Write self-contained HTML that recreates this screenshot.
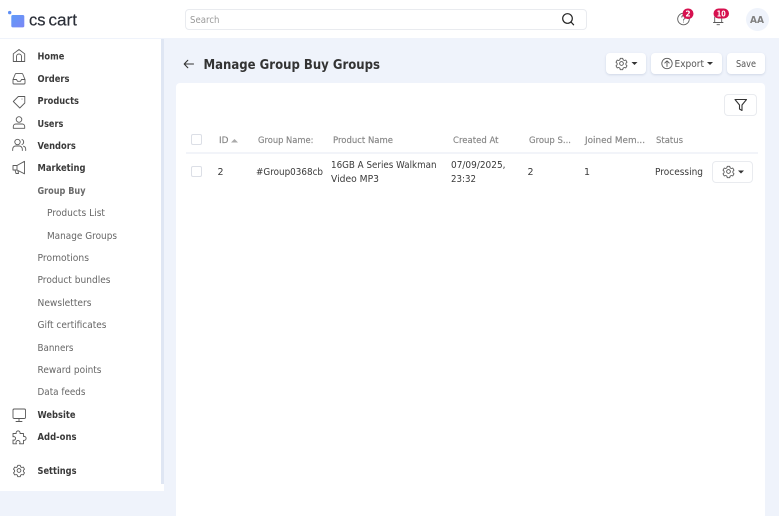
<!DOCTYPE html>
<html lang="en">
<head>
<meta charset="utf-8">
<title>Manage Group Buy Groups</title>
<style>
html,body{margin:0;padding:0;width:779px;height:516px;overflow:hidden;background:#eff3fb;}
.b{position:absolute;box-sizing:border-box;}
svg{position:absolute;left:0;top:0;}
text{font-family:"DejaVu Sans","Liberation Sans",sans-serif;}
.logo{font-family:"Liberation Sans",sans-serif;font-size:17px;fill:#2b2f38;stroke:#2b2f38;stroke-width:.2px;}
.m{font-size:9.500px;font-weight:700;fill:#3a3a3a;}
.s{font-size:9.500px;fill:#666;}
.sb{font-size:9.500px;font-weight:700;fill:#6a6a6a;}
.h{font-size:8.800px;font-weight:400;fill:#858585;stroke:#858585;stroke-width:.15px;}
.c{font-size:9.500px;fill:#3a3a3a;}
.i{fill:none;stroke:#5a5a5a;stroke-width:.9;stroke-linecap:round;stroke-linejoin:round;}
.btn{background:#fff;border-radius:4px;box-shadow:0 1px 2px rgba(120,135,170,.25);}
</style>
</head>
<body>
<div class="b" style="left:0;top:0;width:779px;height:38px;background:#fff;"></div>
<div class="b" style="left:0;top:39px;width:161px;height:452px;background:#fff;"></div>
<div class="b" style="left:161px;top:39px;width:3px;height:445px;background:#dfe6f3;"></div>
<div class="b" style="left:161px;top:484px;width:3px;height:7px;background:#fff;"></div>
<div class="b" style="left:176px;top:83px;width:589px;height:433px;background:#fff;border-radius:4px 4px 0 0;"></div>
<div class="b" style="left:185px;top:9px;width:402px;height:21px;background:#fff;border:1px solid #e9ebef;border-radius:4px;"></div>
<div class="b btn" style="left:606px;top:53px;width:40px;height:21px;"></div>
<div class="b btn" style="left:651px;top:53px;width:71px;height:21px;"></div>
<div class="b btn" style="left:727px;top:53px;width:38px;height:21px;"></div>
<div class="b" style="left:724px;top:94px;width:33px;height:22px;border:1px solid #e9ebef;border-radius:4px;background:#fff;"></div>
<div class="b" style="left:186px;top:152px;width:572px;height:2px;background:#f2f4f9;"></div>
<div class="b" style="left:191px;top:134px;width:11px;height:11px;border:1px solid #dcdfe6;border-radius:2px;background:#fff;"></div>
<div class="b" style="left:191px;top:166px;width:11px;height:11px;border:1px solid #dcdfe6;border-radius:2px;background:#fff;"></div>
<div class="b" style="left:712px;top:161px;width:41px;height:22px;border:1px solid #e9ebef;border-radius:4px;background:#fff;"></div>
<div class="b" style="left:745.500px;top:7.500px;width:23px;height:23px;border-radius:50%;background:#eff3fb;"></div>

<svg width="779" height="516" viewBox="0 0 779 516" xmlns="http://www.w3.org/2000/svg">
<defs>
<linearGradient id="lg" x1="0" y1="0" x2="1" y2="1"><stop offset="0" stop-color="#5f9bf8"/><stop offset="1" stop-color="#7c86f5"/></linearGradient>
<g id="gear" class="i">
<circle cx="0" cy="0" r="1.900"/>
<path d="M-1.200-5.200h2.400l.4 1.500 1.200.7 1.500-.4 1.200 2.100-1.100 1.100v1.400l1.100 1.100-1.200 2.100-1.500-.4-1.200.7-.4 1.500h-2.400l-.4-1.500-1.200-.7-1.500.4-1.200-2.100 1.100-1.100v-1.400l-1.100-1.100 1.200-2.100 1.500.4 1.200-.7z"/>
</g>
</defs>

<!-- logo -->
<circle cx="9.700" cy="12.600" r="1.700" fill="#5f8ff5"/>
<rect x="11.300" y="15" width="13" height="12.400" rx="1.500" fill="url(#lg)"/>
<text class="logo" x="29" y="25.300" textLength="16.500" lengthAdjust="spacingAndGlyphs">cs</text>
<text class="logo" x="48.500" y="25.300" textLength="28.500" lengthAdjust="spacingAndGlyphs">cart</text>

<!-- search -->
<text x="190" y="22.800" font-size="9.500" fill="#9a9a9a" textLength="29.500" lengthAdjust="spacingAndGlyphs">Search</text>
<circle cx="567.500" cy="18.500" r="4.800" fill="none" stroke="#222" stroke-width="1.200"/>
<path d="M571 22l2.600 2.800" stroke="#222" stroke-width="1.200" fill="none" stroke-linecap="round"/>

<!-- header icons -->
<circle cx="683.500" cy="19" r="5.800" class="i"/>
<path d="M681.800 17.200a1.800 1.800 0 1 1 2.600 1.700c-.6.3-.9.7-.9 1.300M683.500 22v.1" class="i"/>
<rect x="682.500" y="8.500" width="11" height="10.500" rx="5.200" fill="#d6114f"/>
<text x="688" y="16.600" font-size="7.500" font-weight="700" fill="#fff" text-anchor="middle">2</text>
<path d="M713.500 22.500h9.500M714.700 22v-4.500a3.500 3.500 0 0 1 7 0V22M717 24.700h2.500" class="i"/>
<rect x="713.500" y="8.500" width="15.500" height="10" rx="5" fill="#d6114f"/>
<text x="721.200" y="16.400" font-size="7.500" font-weight="700" fill="#fff" text-anchor="middle" textLength="9" lengthAdjust="spacingAndGlyphs">10</text>
<text x="757" y="22.800" font-size="9.500" font-weight="700" fill="#808080" text-anchor="middle" textLength="14" lengthAdjust="spacingAndGlyphs">AA</text>

<!-- sidebar icons -->
<path d="M13.300 61.500v-7.700l5.700-4.300 5.700 4.300v7.700zM16.500 61.500v-5a2.500 2.500 0 0 1 5 0v5" class="i"/>
<path d="M13 79.500l2.300-5.500a1 1 0 0 1 .9-.6h5.600a1 1 0 0 1 .9.600l2.300 5.500v3.500a1 1 0 0 1-1 1h-10a1 1 0 0 1-1-1zH16.500l1 1.800h3l1-1.800H25" class="i"/>
<path d="M13.300 101.500l5-5h6.500v6.500l-5 5zM22 99v.1" class="i"/>
<circle cx="19" cy="119.500" r="2.800" class="i"/>
<path d="M13.300 128.300v-1.800a2.500 2.500 0 0 1 2.500-2.500h6.400a2.500 2.500 0 0 1 2.500 2.500v1.800z" class="i"/>
<circle cx="17.500" cy="142" r="2.700" class="i"/>
<path d="M12.700 150.500v-1.500a3 3 0 0 1 3-3h3.600a3 3 0 0 1 3 3v1.500M22 139.500a2.700 2.700 0 0 1 0 5M23.500 146.200a3 3 0 0 1 2.200 2.800v1.500" class="i"/>
<path d="M13 165.500v4.500h4l7.500 3.800v-12.500l-7.500 4.200zM17 165.500v4.500M15 170l1 3.500h2.500L18 171" class="i"/>
<rect x="13" y="409" width="12.500" height="9.500" rx="1.200" class="i"/>
<path d="M19 418.500v2.500M16 421.500h6" class="i"/>
<path d="M13 433.500h3.200a2 2 0 1 1 3.800 0h3.500v3a2 2 0 1 1 0 3.800v3.500h-4a2 2 0 1 0-3 0h-3.500v-3.800a1.800 1.800 0 1 0 0-3.200z" class="i"/>
<use href="#gear" x="19" y="470.500"/>

<!-- sidebar labels -->
<text class="m" x="37.500" y="59.500" textLength="26.800" lengthAdjust="spacingAndGlyphs">Home</text>
<text class="m" x="37.500" y="82" textLength="32" lengthAdjust="spacingAndGlyphs">Orders</text>
<text class="m" x="37.500" y="104" textLength="41.500" lengthAdjust="spacingAndGlyphs">Products</text>
<text class="m" x="37.500" y="127" textLength="25.800" lengthAdjust="spacingAndGlyphs">Users</text>
<text class="m" x="37.500" y="149" textLength="38.300" lengthAdjust="spacingAndGlyphs">Vendors</text>
<text class="m" x="37.500" y="171" textLength="48" lengthAdjust="spacingAndGlyphs">Marketing</text>
<text class="sb" x="37.500" y="194" textLength="48" lengthAdjust="spacingAndGlyphs">Group Buy</text>
<text class="s" x="47" y="216" textLength="58" lengthAdjust="spacingAndGlyphs">Products List</text>
<text class="s" x="47" y="239" textLength="70" lengthAdjust="spacingAndGlyphs">Manage Groups</text>
<text class="s" x="37.500" y="261" textLength="51.500" lengthAdjust="spacingAndGlyphs">Promotions</text>
<text class="s" x="37.500" y="283" textLength="73" lengthAdjust="spacingAndGlyphs">Product bundles</text>
<text class="s" x="37.500" y="306" textLength="54" lengthAdjust="spacingAndGlyphs">Newsletters</text>
<text class="s" x="37.500" y="328" textLength="69" lengthAdjust="spacingAndGlyphs">Gift certificates</text>
<text class="s" x="37.500" y="351" textLength="36" lengthAdjust="spacingAndGlyphs">Banners</text>
<text class="s" x="37.500" y="373" textLength="64" lengthAdjust="spacingAndGlyphs">Reward points</text>
<text class="s" x="37.500" y="395" textLength="48" lengthAdjust="spacingAndGlyphs">Data feeds</text>
<text class="m" x="37.500" y="418" textLength="38" lengthAdjust="spacingAndGlyphs">Website</text>
<text class="m" x="37.500" y="440" textLength="39" lengthAdjust="spacingAndGlyphs">Add-ons</text>
<text class="m" x="37.500" y="474" textLength="39" lengthAdjust="spacingAndGlyphs">Settings</text>

<!-- title -->
<path d="M193.500 64h-9M187.800 60.300L184.200 64l3.600 3.700" fill="none" stroke="#333" stroke-width="1.100" stroke-linecap="round" stroke-linejoin="round"/>
<text x="203.500" y="68.800" font-size="13" font-weight="700" fill="#333" textLength="176.500" lengthAdjust="spacingAndGlyphs">Manage Group Buy Groups</text>

<!-- toolbar -->
<use href="#gear" x="621.500" y="63.500"/>
<path d="M631.500 62h6l-3 3z" fill="#333"/>
<circle cx="667" cy="63.500" r="5.200" class="i"/>
<path d="M667 66.500v-5.500M664.800 63l2.200-2.200 2.200 2.200" class="i"/>
<text x="674.500" y="67" font-size="9.500" fill="#555" textLength="29.500" lengthAdjust="spacingAndGlyphs">Export</text>
<path d="M707 62h6l-3 3z" fill="#333"/>
<text x="736" y="67" font-size="9.500" fill="#555" textLength="20" lengthAdjust="spacingAndGlyphs">Save</text>
<path d="M735 99.500h11.500l-4.500 5.500v5.500l-2.500-1.500v-4z" fill="none" stroke="#333" stroke-width="1.100" stroke-linejoin="round"/>

<!-- table head -->
<text class="h" x="219" y="143.200" textLength="9.500" lengthAdjust="spacingAndGlyphs">ID</text>
<path d="M231 142.500h7l-3.500-3.500z" fill="#aaa"/>
<text class="h" x="258" y="143.200" textLength="55.500" lengthAdjust="spacingAndGlyphs">Group Name:</text>
<text class="h" x="333" y="143.200" textLength="60" lengthAdjust="spacingAndGlyphs">Product Name</text>
<text class="h" x="453" y="143.200" textLength="45.500" lengthAdjust="spacingAndGlyphs">Created At</text>
<text class="h" x="529" y="143.200" textLength="42" lengthAdjust="spacingAndGlyphs">Group S...</text>
<text class="h" x="585" y="143.200" textLength="60" lengthAdjust="spacingAndGlyphs">Joined Mem...</text>
<text class="h" x="656" y="143.200" textLength="27" lengthAdjust="spacingAndGlyphs">Status</text>

<!-- table row -->
<text class="c" x="217.500" y="175">2</text>
<text class="c" x="256" y="175" textLength="67" lengthAdjust="spacingAndGlyphs">#Group0368cb</text>
<text class="c" x="331" y="168" textLength="105.500" lengthAdjust="spacingAndGlyphs">16GB A Series Walkman</text>
<text class="c" x="331" y="182" textLength="48" lengthAdjust="spacingAndGlyphs">Video MP3</text>
<text class="c" x="451" y="168" textLength="54.500" lengthAdjust="spacingAndGlyphs">07/09/2025,</text>
<text class="c" x="451" y="182" textLength="25" lengthAdjust="spacingAndGlyphs">23:32</text>
<text class="c" x="527.500" y="175">2</text>
<text class="c" x="584" y="175">1</text>
<text class="c" x="655" y="175" textLength="48" lengthAdjust="spacingAndGlyphs">Processing</text>
<use href="#gear" x="728.500" y="171.500"/>
<path d="M738 170.500h6l-3 3z" fill="#333"/>
</svg>
</body>
</html>
